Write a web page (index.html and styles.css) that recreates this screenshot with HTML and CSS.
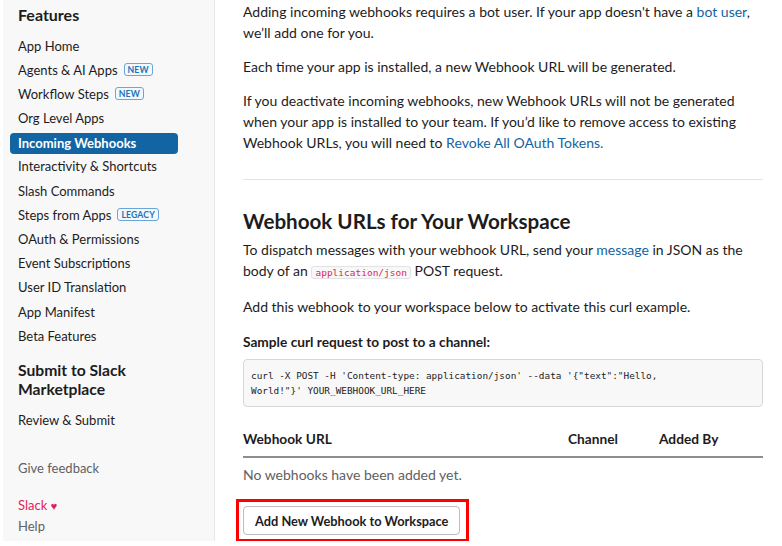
FILE: index.html
```html
<!DOCTYPE html>
<html>
<head>
<meta charset="utf-8">
<link rel="stylesheet" href="styles.css">
</head>
<body>
<div class="frame">
  <aside class="sidebar">
    <h2 class="side-title">Features</h2>
    <nav class="nav">
      <a class="nav-item">App Home</a>
      <a class="nav-item">Agents &amp; AI Apps <span class="badge">NEW</span></a>
      <a class="nav-item">Workflow Steps <span class="badge">NEW</span></a>
      <a class="nav-item">Org Level Apps</a>
      <a class="nav-item active">Incoming Webhooks</a>
      <a class="nav-item">Interactivity &amp; Shortcuts</a>
      <a class="nav-item">Slash Commands</a>
      <a class="nav-item">Steps from Apps <span class="badge">LEGACY</span></a>
      <a class="nav-item">OAuth &amp; Permissions</a>
      <a class="nav-item">Event Subscriptions</a>
      <a class="nav-item">User ID Translation</a>
      <a class="nav-item">App Manifest</a>
      <a class="nav-item">Beta Features</a>
    </nav>
    <h2 class="side-title second">Submit to Slack Marketplace</h2>
    <nav class="nav">
      <a class="nav-item">Review &amp; Submit</a>
    </nav>
    <div class="side-foot">
      <a class="muted feedback">Give feedback</a>
      <a class="slack">Slack <span class="heart">&#x2665;</span></a>
      <a class="muted help">Help</a>
    </div>
  </aside>
  <main class="main">
    <p class="para">Adding incoming webhooks requires a bot user. If your app doesn't have a <a class="link">bot user</a>, we’ll add one for you.</p>
    <p class="para">Each time your app is installed, a new Webhook URL will be generated.</p>
    <p class="para">If you deactivate incoming webhooks, new Webhook URLs will not be generated when your app is installed to your team. If you’d like to remove access to existing Webhook URLs, you will need to <a class="link">Revoke All OAuth Tokens.</a></p>
    <hr class="divider">
    <h1 class="heading">Webhook URLs for Your Workspace</h1>
    <p class="para tight">To dispatch messages with your webhook URL, send your <a class="link">message</a> in JSON as the body of an <code class="inline-code">application/json</code> POST request.</p>
    <p class="para">Add this webhook to your workspace below to activate this curl example.</p>
    <h3 class="label">Sample curl request to post to a channel:</h3>
    <pre class="code">curl -X POST -H 'Content-type: application/json' --data '{"text":"Hello,
World!"}' YOUR_WEBHOOK_URL_HERE</pre>
    <div class="table-head">
      <span class="col-url">Webhook URL</span>
      <span class="col-channel">Channel</span>
      <span class="col-by">Added By</span>
    </div>
    <p class="empty">No webhooks have been added yet.</p>
    <div class="highlight">
      <button class="btn">Add New Webhook to Workspace</button>
    </div>
  </main>
</div>
</body>
</html>
```
FILE: styles.css
```css
* { box-sizing: border-box; }
html, body { margin: 0; padding: 0; background: #fff; }
body {
  font-family: Lato, "Noto Sans", sans-serif;
  color: #1d1c1d;
  width: 782px;
  height: 546px;
  overflow: hidden;
}
.frame {
  display: flex;
  margin-left: 3px;
  height: 541px;
  overflow: hidden;
}
.sidebar {
  width: 212px;
  flex: none;
  background: #f8f8f8;
  border-right: 1px solid #e6e6e6;
  padding: 5px 0 0 0;
  display: flex;
  flex-direction: column;
}
.side-title {
  font-size: 16px;
  font-weight: 700;
  line-height: 20px;
  margin: 0 0 10px 0;
  padding: 0 10px 0 15px;
  color: #1d1c1d;
}
.side-title.second {
  font-size: 15.7px;
  line-height: 19px;
  margin-top: 12px;
  margin-bottom: 10px;
}
.nav {
  display: flex;
  flex-direction: column;
  padding: 0 36px 0 7px;
}
.nav-item {
  display: flex;
  align-items: center;
  gap: 6px;
  height: 21px;
  margin-bottom: 3.2px;
  padding: 0 8px;
  border-radius: 4px;
  font-size: 13px;
  color: #1d1c1d;
}
.nav-item.active {
  background: #1264a3;
  color: #fff;
  font-weight: 700;
  margin-top: 1px;
  margin-bottom: 2.2px;
}
.badge {
  font-size: 8.7px;
  font-weight: 700;
  color: #1d73b4;
  border: 1px solid #6aa6d6;
  background: #f2f8fd;
  border-radius: 3px;
  padding: 0 3px;
  line-height: 11px;
  letter-spacing: 0.1px;
}
.side-foot {
  display: flex;
  flex-direction: column;
  padding-left: 15px;
  margin-top: 24px;
  font-size: 13px;
}
.muted { color: #616061; }
.feedback { margin-bottom: 17px; line-height: 20px; }
.slack { color: #e01e5a; line-height: 20px; }
.heart { font-size: 11px; }
.help { line-height: 21px; }

.main {
  flex: 1;
  padding: 1px 19px 0 28px;
}
.para {
  font-size: 14px;
  line-height: 21px;
  margin: 0 0 13px 0;
}
.para.tight { margin-bottom: 13px; }
.link { color: #1264a3; }
.divider {
  border: 0;
  border-top: 1px solid #e2e2e2;
  margin: 26px 0 27px 0;
}
.heading {
  font-size: 20.6px;
  font-weight: 700;
  line-height: 28px;
  margin: 0 0 4px 0;
}
.inline-code {
  font-family: "DejaVu Sans Mono", monospace;
  font-size: 9.5px;
  color: #e01e5a;
  background: #f8f8f8;
  border: 1px solid #e2e2e2;
  border-radius: 3px;
  padding: 0 3px;
}
.label {
  font-size: 13.7px;
  font-weight: 700;
  line-height: 20px;
  margin: 15px 0 7px 0;
}
.code {
  margin: 0;
  background: #f8f8f8;
  border: 1px solid #d8d8d8;
  border-radius: 4px;
  padding: 8px 7px 8px 7px;
  font-family: "DejaVu Sans Mono", monospace;
  font-size: 9.4px;
  line-height: 15px;
  color: #1d1c1d;
  white-space: pre-wrap;
}
.table-head {
  display: flex;
  align-items: center;
  margin-top: 22px;
  padding-bottom: 7px;
  border-bottom: 2px solid #8d8d8d;
  font-size: 13.7px;
  font-weight: 700;
  line-height: 20px;
}
.col-url { width: 325px; }
.col-channel { width: 91px; }
.empty {
  color: #616061;
  font-size: 14px;
  line-height: 20px;
  margin: 7px 0 14px 0;
}
.highlight {
  display: inline-block;
  border: 3px solid #ff0000;
  padding: 4px 6px 4px 4px;
  margin-left: -7px;
}
.btn {
  display: block;
  font-family: Lato, "Noto Sans", sans-serif;
  font-size: 12.8px;
  font-weight: 700;
  color: #1d1c1d;
  background: #fff;
  border: 1px solid #bcbcbc;
  border-radius: 4px;
  height: 29px;
  padding: 0 11px;
}
```
